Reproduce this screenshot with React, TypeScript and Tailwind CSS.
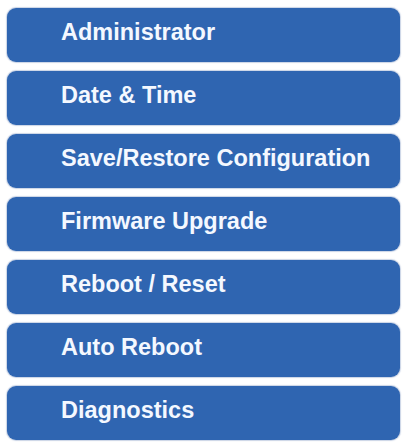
import React from "react";

const items = [
  "Administrator",
  "Date & Time",
  "Save/Restore Configuration",
  "Firmware Upgrade",
  "Reboot / Reset",
  "Auto Reboot",
  "Diagnostics",
];

export default function App() {
  return (
    <div className="w-[403px] h-[442px] bg-white pt-[8px] pl-[7px] pr-[3px] flex flex-col gap-[9px] font-['Liberation_Sans',Arial,sans-serif]">
      {items.map((t) => (
        <div
          key={t}
          className="h-[54px] rounded-[9px] bg-[#2f65b1] shadow-[0_0_1px_1px_rgba(40,80,150,0.25)] flex items-center pl-[54px] pb-[4px] text-[23.5px] font-bold text-[#f4f8ff]"
        >
          {t}
        </div>
      ))}
    </div>
  );
}
